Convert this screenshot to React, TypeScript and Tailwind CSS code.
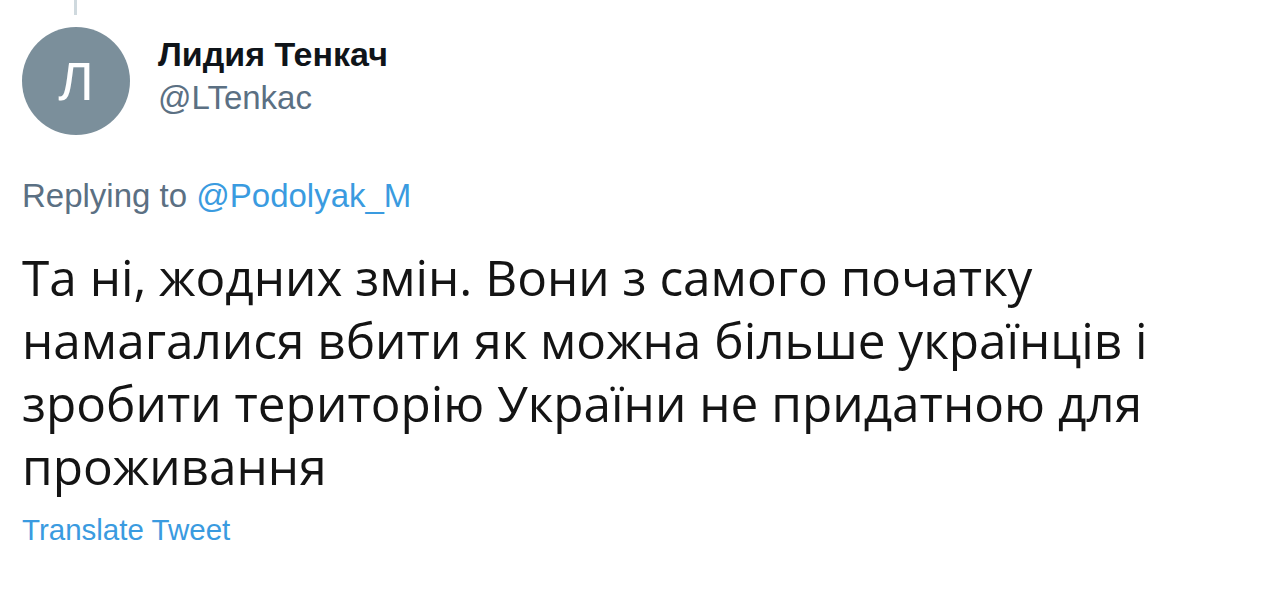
export default function App() {
  return (
    <div className="w-[1264px] h-[600px] bg-white overflow-hidden relative">
      {/* thread line */}
      <div className="absolute left-[74px] top-0 w-[3px] h-[15px] bg-[#cfd9de]" />
      <div className="pl-[22px] pt-[27px]">
        <div className="flex items-center gap-[28px]">
          <div className="w-[108px] h-[108px] rounded-full bg-[#7b8f9b] flex items-center justify-center shrink-0">
            <span className="text-white text-[54px] leading-none font-['Liberation_Sans',sans-serif]">Л</span>
          </div>
          <div className="flex flex-col -mt-[10px]">
            <span className="text-[34px] leading-[44px] font-bold text-[#0f1419] font-['Liberation_Sans',sans-serif]">
              Лидия Тенкач
            </span>
            <span className="text-[33px] leading-[44px] text-[#5b7083] font-['Liberation_Sans',sans-serif]">
              @LTenkac
            </span>
          </div>
        </div>
        <div className="mt-[39px] text-[33px] leading-[44px] text-[#5b7083] font-['Liberation_Sans',sans-serif]">
          Replying to <span className="text-[#3a9be0]">@Podolyak_M</span>
        </div>
        <p className="mt-[28px] w-[1220px] text-[49.5px] leading-[63px] text-[#141414] font-['Open_Sans',sans-serif]">
          Та ні, жодних змін. Вони з самого початку
          <br />
          намагалися вбити як можна більше українців і
          <br />
          зробити територію України не придатною для
          <br />
          проживання
        </p>
        <div className="mt-[14px] text-[29.5px] leading-[36px] text-[#3a9be0] font-['Liberation_Sans',sans-serif]">
          Translate Tweet
        </div>
      </div>
    </div>
  );
}
